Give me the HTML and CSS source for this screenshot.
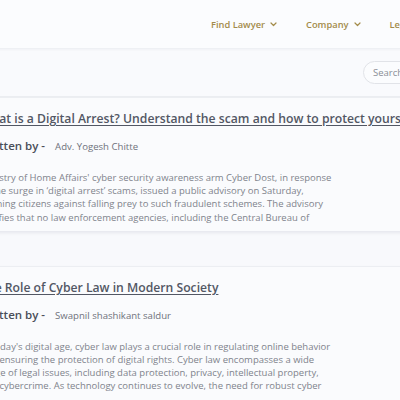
FILE: index.html
```html
<!DOCTYPE html>
<html lang="en">
<head>
<meta charset="utf-8">
<title>Blogs</title>
<link rel="stylesheet" href="styles.css">
</head>
<body>
<div class="page">
  <header class="topbar">
    <nav class="nav">
      <a class="nav-item" href="#">Find Lawyer
        <svg class="chev" viewBox="0 0 7 5" width="7" height="5"><path d="M1 1l2.5 2.5 2.5-2.5"/></svg>
      </a>
      <a class="nav-item" href="#">Company
        <svg class="chev" viewBox="0 0 7 5" width="7" height="5"><path d="M1 1l2.5 2.5 2.5-2.5"/></svg>
      </a>
      <a class="nav-item" href="#">Legal Services
        <svg class="chev" viewBox="0 0 7 5" width="7" height="5"><path d="M1 1l2.5 2.5 2.5-2.5"/></svg>
      </a>
    </nav>
  </header>

  <div class="searchbar">
    <input class="search" type="text" placeholder="Search">
  </div>

  <main class="list">
    <article class="card">
      <a class="title" href="#">What is a Digital Arrest? Understand the scam and how to protect yourself</a>
      <div class="byline"><span class="by">Written by -</span><span class="author">Adv. Yogesh Chitte</span></div>
      <p class="excerpt">Ministry of Home Affairs' cyber security awareness arm Cyber Dost, in response<br>to the surge in ‘digital arrest’ scams, issued a public advisory on Saturday,<br>warning citizens against falling prey to such fraudulent schemes. The advisory<br>clarifies that no law enforcement agencies, including the Central Bureau of</p>
    </article>

    <article class="card">
      <a class="title" href="#">The Role of Cyber Law in Modern Society</a>
      <div class="byline"><span class="by">Written by -</span><span class="author">Swapnil shashikant saldur</span></div>
      <p class="excerpt">In today's digital age, cyber law plays a crucial role in regulating online behavior<br>and ensuring the protection of digital rights. Cyber law encompasses a wide<br>range of legal issues, including data protection, privacy, intellectual property,<br>and cybercrime. As technology continues to evolve, the need for robust cyber</p>
    </article>
  </main>
</div>
</body>
</html>
```

FILE: styles.css
```css
html, body {
  margin: 0;
  padding: 0;
  width: 400px;
  height: 400px;
  overflow: hidden;
  background: #f8f9fc;
  font-family: "Open Sans", "DejaVu Sans", sans-serif;
}

.page {
  width: 520px;
  margin-left: -40px;
}

.topbar {
  height: 48px;
  background: #fbfcfe;
  box-shadow: 0 1px 3px rgba(20, 30, 60, 0.07);
  display: flex;
  align-items: center;
  position: relative;
  z-index: 1;
}

.nav {
  display: flex;
  align-items: center;
  gap: 29px;
  padding-left: 251px;
  white-space: nowrap;
}

.nav-item {
  display: flex;
  align-items: center;
  gap: 5px;
  font-size: 9.3px;
  font-weight: 600;
  color: #a38b4a;
  text-decoration: none;
}

.chev {
  fill: none;
  stroke: #a38b4a;
  stroke-width: 1.2;
  stroke-linecap: round;
  stroke-linejoin: round;
}

.searchbar {
  height: 48px;
  display: flex;
  align-items: center;
  padding-left: 403px;
  background: #f9fafd;
  border-bottom: 1px solid #eceef2;
}

.search {
  width: 120px;
  height: 23px;
  box-sizing: border-box;
  border: 1px solid #e1e3e8;
  border-radius: 12px;
  background: #fbfcfe;
  padding: 0 9px;
  font-family: inherit;
  font-size: 9.5px;
  color: #55585f;
  outline: none;
}

.search::placeholder {
  color: #8a8d95;
}

.list {
  display: flex;
  flex-direction: column;
  gap: 35px;
}

.card {
  background: #fafbfd;
  border-top: 1px solid #eceef2;
  box-shadow: 0 2px 3px rgba(20, 30, 60, 0.08);
  padding: 13px 0 7px 20px;
}

.title {
  display: block;
  font-size: 12.2px;
  line-height: 16px;
  font-weight: 600;
  color: #525764;
  text-decoration: underline;
  text-underline-offset: 2px;
  white-space: nowrap;
}

.byline {
  display: flex;
  align-items: baseline;
  gap: 10px;
  margin-top: 10px;
  line-height: 18px;
  white-space: nowrap;
}

.by {
  font-size: 11.5px;
  font-weight: 600;
  color: #4a4e59;
}

.author {
  font-size: 9.6px;
  font-weight: 500;
  color: #6f727c;
}

.excerpt {
  margin: 15px 0 0;
  font-size: 9.5px;
  line-height: 13.2px;
  color: #80838c;
  white-space: nowrap;
}
```
